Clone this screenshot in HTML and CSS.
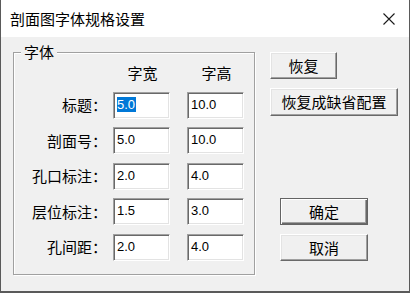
FILE: index.html
```html
<!DOCTYPE html>
<html lang="zh-CN">
<head>
  <meta charset="UTF-8" />
  <title>剖面图字体规格设置</title>
  <link rel="stylesheet" href="styles.css">
</head>
<body>
  <div class="window">
    <div class="titlebar">
      <span class="title">剖面图字体规格设置</span>
      <svg class="close" width="12" height="12" viewBox="0 0 12 12">
        <path d="M0.5 0.5 L11.5 11.5 M11.5 0.5 L0.5 11.5" stroke="#1a1a1a" stroke-width="1.1" fill="none"/>
      </svg>
    </div>

    <div class="content">
      <!-- 字体 group -->
      <div class="group">
        <span class="legend">字体</span>
        <div class="grid">
          <span></span>
          <span class="head">字宽</span>
          <span class="head">字高</span>

          <span class="label">标题：</span>
          <span class="field"><span class="sel">5.0</span></span>
          <span class="field">10.0</span>

          <span class="label">剖面号：</span>
          <span class="field">5.0</span>
          <span class="field">10.0</span>

          <span class="label">孔口标注：</span>
          <span class="field">2.0</span>
          <span class="field">4.0</span>

          <span class="label">层位标注：</span>
          <span class="field">1.5</span>
          <span class="field">3.0</span>

          <span class="label">孔间距：</span>
          <span class="field">2.0</span>
          <span class="field">4.0</span>
        </div>
      </div>

      <!-- buttons -->
      <div class="actions">
        <button class="btn btn-restore">恢复</button>
        <button class="btn btn-defaults">恢复成缺省配置</button>
        <button class="btn btn-ok default">确定</button>
        <button class="btn btn-cancel">取消</button>
      </div>
    </div>
  </div>
</body>
</html>
```

FILE: styles.css
```css
body { margin: 0; background: #f0f0f0; font-family: "Noto Sans CJK SC", "Liberation Sans", sans-serif; color: #000; }
.window { width: 410px; height: 293px; box-sizing: border-box; border: 1px solid #5a5a5a; border-top: none; border-bottom-width: 2px; background: #f0f0f0; }

.titlebar { height: 37px; background: #fff; display: flex; align-items: center; justify-content: space-between; padding: 0 14px 0 9px; }
.title { font-size: 15px; line-height: 20px; margin-top: 1px; }
.close { display: block; margin-top: 1px; }

.content { display: flex; gap: 15px; padding: 15px 0 0 12px; }

.group { position: relative; width: 240px; height: 221px; border: 1px solid #a0a0a0; box-shadow: inset 1px 1px #fff, 1px 1px #fff; }
.legend { position: absolute; left: 7px; top: -11px; padding: 0 3px; background: #f0f0f0; font-size: 15px; line-height: 20px; }

.grid { display: grid; grid-template-columns: 93px 63px 74px; grid-template-rows: 20px repeat(5, 27px); row-gap: 8.5px; padding-top: 10px; align-items: center; }
.head { justify-self: end; width: 57px; text-align: center; font-size: 15px; line-height: 20px; padding-left: 2px; box-sizing: border-box; }
.label { justify-self: end; font-size: 15px; line-height: 20px; white-space: nowrap; }

.field { justify-self: end; width: 57px; height: 27px; box-sizing: border-box; background: #fff; border: 1px solid; border-color: #a0a0a0 #fff #fff #a0a0a0; box-shadow: inset 1px 1px #696969, inset -1px -1px #e3e3e3; padding: 4px 0 0 3px; font-family: "Liberation Sans", Arial, sans-serif; font-size: 13px; line-height: 15px; }
.sel { background: #0078d7; color: #fff; padding: 0 1px 0 0; }

.actions { display: flex; flex-direction: column; align-items: flex-start; }
.btn { height: 27px; box-sizing: border-box; background: #f0f0f0; border: 1px solid; border-color: #fff #696969 #696969 #fff; box-shadow: inset -1px -1px #a0a0a0, inset 1px 1px #e3e3e3; font-family: "Noto Sans CJK SC", sans-serif; font-size: 15px; line-height: 20px; padding: 0; color: #000; }
.btn-restore { width: 67px; }
.btn-defaults { width: 128px; height: 28px; margin-top: 9px; }
.btn-ok { width: 88px; margin: 82px 0 0 10px; }
.btn-cancel { width: 88px; margin: 9px 0 0 10px; }
.btn.default { border-color: #646464; box-shadow: inset 1px 1px #fff, inset -1px -1px #696969, inset -2px -2px #a0a0a0; }
```
